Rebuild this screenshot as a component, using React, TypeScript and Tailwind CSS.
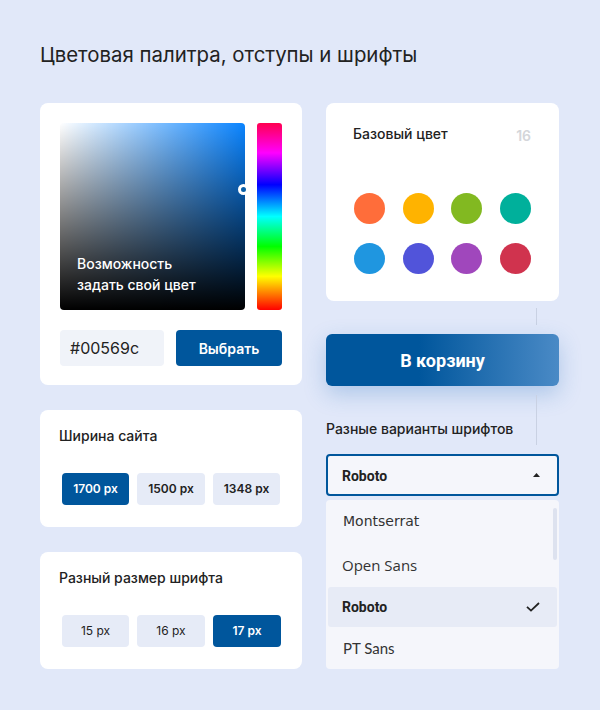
import React from "react";

const inter = { fontFamily: "Inter, 'Noto Sans', sans-serif" };

function Chip({ label, active, bold }: { label: string; active?: boolean; bold?: boolean }) {
  return (
    <div
      className={
        "flex items-center justify-center h-8 rounded-[4px] text-[12px] " +
        (active ? "bg-[#00569c] text-white font-semibold" : "bg-[#e6ebf7] text-[#222] ") +
        (!active && bold ? "font-semibold" : "") +
        (!active && !bold ? "font-normal" : "")
      }
    >
      {label}
    </div>
  );
}

export default function App() {
  const colors = ["#ff6d3a", "#ffb300", "#82b921", "#00b09b", "#1f96e0", "#5154da", "#a047bc", "#d0334e"];
  return (
    <div className="w-[600px] h-[710px] bg-[#e1e8f9] overflow-hidden" style={inter}>
      <div className="pt-[43px] pl-10 text-[20.4px] leading-6 text-[#222]">Цветовая палитра, отступы и шрифты</div>
      <div className="flex gap-6 pl-10 mt-[36px]">
        {/* left column */}
        <div className="w-[262px] flex flex-col gap-[25px]">
          <div className="bg-white rounded-lg pt-5 px-5 pb-[19px]">
            <div className="flex gap-3">
              <div
                className="relative w-[185px] h-[187px] rounded-[4px]"
                style={{
                  background:
                    "linear-gradient(to bottom, rgba(0,0,0,0), #000), linear-gradient(to right, #fff, rgba(255,255,255,0)), #0a84ff",
                }}
              >
                <div className="absolute left-[17px] bottom-[15px] text-white text-[14px] font-medium leading-[21px]">
                  Возможность
                  <br />
                  задать свой цвет
                </div>
                <div className="absolute left-[178px] top-[61px] w-[11px] h-[11px] rounded-full border-[3px] border-white bg-[#0a5fa8]" />
              </div>
              <div
                className="w-[25px] h-[187px] rounded-[3px]"
                style={{
                  background:
                    "linear-gradient(to bottom, #ff0050, #ff00ff 16%, #0000ff 33%, #00ffff 50%, #00ff00 66%, #ffff00 82%, #ff0000)",
                }}
              />
            </div>
            <div className="flex gap-3 mt-5">
              <div className="w-[104px] h-9 rounded-[4px] bg-[#f0f3f9] flex items-center pl-[10px] text-[16px] text-[#222]">
                #00569c
              </div>
              <div className="w-[106px] h-9 rounded-[4px] bg-[#00569c] flex items-center justify-center text-white text-[14px] font-semibold">
                Выбрать
              </div>
            </div>
          </div>

          <div className="bg-white rounded-lg pt-4 px-[19px] pb-[22px]">
            <div className="text-[14px] font-medium leading-5 text-[#222]">Ширина сайта</div>
            <div className="grid grid-cols-[67px_68px_67px] gap-2 ml-[3px] mt-[27px]">
              <Chip label="1700 px" active />
              <Chip label="1500 px" bold />
              <Chip label="1348 px" bold />
            </div>
          </div>

          <div className="bg-white rounded-lg pt-4 px-[19px] pb-[22px]">
            <div className="text-[14px] font-medium leading-5 text-[#222]">Разный размер шрифта</div>
            <div className="grid grid-cols-[67px_68px_68px] gap-2 ml-[3px] mt-[27px]">
              <Chip label="15 px" />
              <Chip label="16 px" />
              <Chip label="17 px" active />
            </div>
          </div>
        </div>

        {/* right column */}
        <div className="w-[233px] flex flex-col">
          <div className="bg-white rounded-lg pt-[21px] pb-[27px]">
            <div className="flex justify-between items-start h-5 pl-[27px] pr-[28px]">
              <span className="text-[14px] font-medium leading-5 text-[#222]">Базовый цвет</span>
              <span className="text-[14px] font-semibold leading-5 text-[#d4d6da] translate-y-[2px]">16</span>
            </div>
            <div className="grid grid-cols-[31px_31px_31px_31px] gap-x-[17.5px] gap-y-[19px] ml-[28px] mt-[49px]">
              {colors.map((c) => (
                <div key={c} className="w-[31px] h-[31px] rounded-full" style={{ backgroundColor: c }} />
              ))}
            </div>
          </div>

          <div className="h-[33px]">
            <div className="ml-[210px] mt-[7px] w-px h-[17px] bg-[#c9d1e3]" />
          </div>

          <div
            className="h-[52px] rounded-md flex items-center justify-center text-white text-[18px] font-bold shadow-[0_8px_22px_rgba(40,110,190,0.28)]"
            style={{
              fontFamily: "Roboto, sans-serif",
              background: "linear-gradient(to right, #00569c 0%, #00569c 40%, #4a8ac6 100%)",
            }}
          >
            В корзину
          </div>

          <div className="h-[68px] flex">
            <div className="w-[210px] mt-[33px] text-[14px] font-medium leading-5 text-[#222]">
              Разные варианты шрифтов
            </div>
            <div className="mt-[9px] w-px h-[50px] bg-[#c9d1e3]" />
          </div>

          <div className="h-[42px] border-2 border-[#00569c] rounded-[4px] bg-[#f5f6fb] flex items-center justify-between pl-[14px] pr-[17px]">
            <span className="text-[14px] font-bold text-[#222] translate-y-[1px]" style={{ fontFamily: "Roboto, sans-serif" }}>
              Roboto
            </span>
            <svg width="7" height="4" viewBox="0 0 7 4">
              <path d="M3.5 0 L7 4 L0 4 Z" fill="#222" />
            </svg>
          </div>

          <div className="relative mt-1 h-[169px] rounded-[4px] bg-[#f5f6fb] px-[2px]">
            <div className="absolute right-[2px] top-[8px] w-[4px] h-[52px] rounded-full bg-[#dde2ef]" />
            <div className="h-[43px] flex items-center pl-[15px] text-[14px] text-[#333]" style={{ fontFamily: "'DejaVu Sans', sans-serif" }}>
              Montserrat
            </div>
            <div className="h-[44px] flex items-center pl-[14px] text-[15px] text-[#333]" style={{ fontFamily: "'Open Sans', sans-serif" }}>
              Open Sans
            </div>
            <div className="h-[40px] flex items-center justify-between pl-[14px] pr-[17px] rounded-[3px] bg-[#e7ebf6]">
              <span className="text-[14px] font-bold text-[#222]" style={{ fontFamily: "Roboto, sans-serif" }}>
                Roboto
              </span>
              <svg width="14" height="10" viewBox="0 0 14 10">
                <path d="M1 4.8 L5 8.6 L13 1" stroke="#222" strokeWidth="1.8" fill="none" />
              </svg>
            </div>
            <div className="h-[42px] flex items-center pl-[15px] text-[15px] text-[#333]" style={{ fontFamily: "Lato, sans-serif" }}>
              PT Sans
            </div>
          </div>
        </div>
      </div>
    </div>
  );
}
